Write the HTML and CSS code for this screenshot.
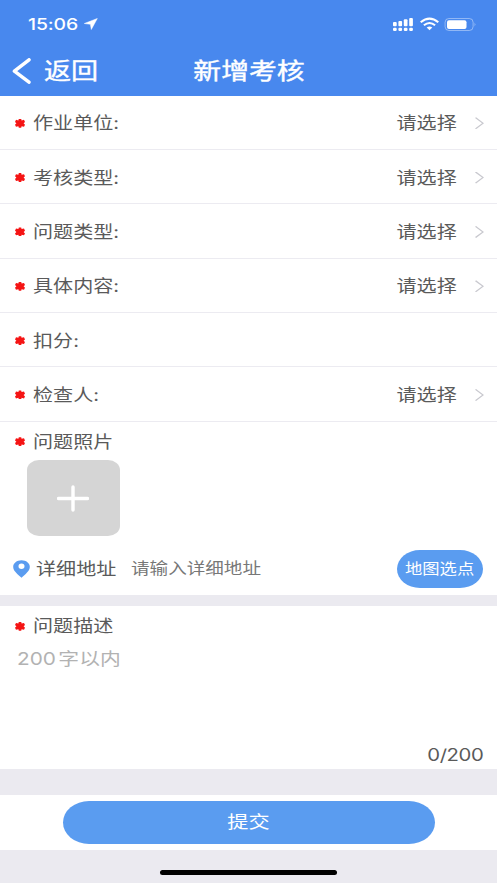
FILE: index.html
```html
<!DOCTYPE html>
<html lang="zh-CN">
<head>
<meta charset="utf-8">
<title>新增考核</title>
<link rel="stylesheet" href="styles.css">
</head>
<body>
<header class="header">
  <div class="status">
    <span class="wide clock">15:06</span>
    <svg class="locate" width="14" height="12" viewBox="0 0 14 12"><path d="M13.3 .5 7.3 11.5 6.4 6.3.3 5.5z" fill="#fff" stroke="#fff" stroke-width=".5" stroke-linejoin="round"/></svg>
    <svg class="signals" width="84" height="16" viewBox="0 0 84 16" fill="#fff">
      <g><rect x="0" y="6" width="3.7" height="4.3" rx="1"/><rect x="5.4" y="5" width="3.7" height="5.3" rx="1"/><rect x="10.8" y="3.2" width="3.7" height="7.1" rx="1"/><rect x="16.2" y="2" width="3.7" height="8.3" rx="1"/>
      <rect x="0" y="11.8" width="3.7" height="3.2" rx="1.2"/><rect x="5.4" y="11.8" width="3.7" height="3.2" rx="1.2"/><rect x="10.8" y="11.8" width="3.7" height="3.2" rx="1.2"/><rect x="16.2" y="11.8" width="3.7" height="3.2" rx="1.2"/></g>
      <g fill="none" stroke="#fff" stroke-width="2.1"><path d="M27.700 6.300Q36.500-.900 45.300 6.300"/><path d="M30.900 9.300Q36.500 4.700 42.100 9.300"/></g>
      <path d="M33.700 11.600Q36.500 9.300 39.300 11.600L36.500 14.200z"/>
      <rect x="52.1" y="2.5" width="28" height="12" rx="3.8" fill="none" stroke="#fff" stroke-opacity=".4"/>
      <rect x="54" y="4.2" width="19.5" height="8.7" rx="2"/>
      <path d="M81.600 6.600Q83.400 8.500 81.600 10.400z" opacity=".5"/>
    </svg>
  </div>
  <nav class="nav">
    <a class="back"><svg width="19" height="26" viewBox="0 0 19 26"><path d="M17 1.800 2.400 13.200 17 24.200" fill="none" stroke="#fff" stroke-width="3.500" stroke-linecap="round" stroke-linejoin="round"/></svg><span class="wide">返回</span></a>
    <h1 class="title"><span class="wide center">新增考核</span></h1>
  </nav>
</header>
<main>
  <section class="rows">
    <div class="row"><i class="star"></i><span class="wide">作业单位:</span><span class="wide value">请选择</span><i class="chev"></i></div>
    <div class="row"><i class="star"></i><span class="wide">考核类型:</span><span class="wide value">请选择</span><i class="chev"></i></div>
    <div class="row"><i class="star"></i><span class="wide">问题类型:</span><span class="wide value">请选择</span><i class="chev"></i></div>
    <div class="row"><i class="star"></i><span class="wide">具体内容:</span><span class="wide value">请选择</span><i class="chev"></i></div>
    <div class="row"><i class="star"></i><span class="wide">扣分:</span></div>
    <div class="row"><i class="star"></i><span class="wide">检查人:</span><span class="wide value">请选择</span><i class="chev"></i></div>
  </section>
  <section class="photos">
    <div class="label"><i class="star"></i><span class="wide">问题照片</span></div>
    <div class="add"><svg width="32" height="27" viewBox="0 0 32 27"><path d="M1.500 13.500H30.500M16 2V25" stroke="#fff" stroke-width="3.400" stroke-linecap="round"/></svg></div>
    <div class="address">
      <svg class="pin" width="17" height="18" viewBox="0 0 17 18"><path fill-rule="evenodd" d="M8.500 .2C3.800.2.2 3 .2 7c0 4 4.600 7.400 8.300 10.800C12.200 14.400 16.800 11 16.800 7c0-4-3.600-6.800-8.300-6.800zM8.500 3.500a3 2.700 0 1 1 0 5.400 3 2.700 0 0 1 0-5.400z" fill="#5a9cf0"/></svg>
      <span class="wide place">详细地址</span>
      <span class="wide hint">请输入详细地址</span>
      <button class="map"><span class="wide center">地图选点</span></button>
    </div>
  </section>
  <section class="desc">
    <div class="label"><i class="star"></i><span class="wide">问题描述</span></div>
    <p class="placeholder"><span class="wide">200<span class="cn">字以内</span></span></p>
    <p class="count"><span class="wide">0/200</span></p>
  </section>
  <section class="actions"><button class="submit"><span class="wide center">提交</span></button></section>
</main>
<footer class="home"><div class="bar"></div></footer>
</body>
</html>
```
FILE: styles.css
```css
* { box-sizing: border-box; }
body {
  margin: 0;
  width: 497px;
  height: 883px;
  overflow: hidden;
  background: #ebeaf0;
  color: #5a5a5a;
  font: 16.6px/24px Inter, "Noto Sans CJK SC", sans-serif;
}
h1, p { margin: 0; font-weight: normal; }
button { border: 0; padding: 0; font: inherit; }

/* Glyphs are drawn wider than tall throughout */
.wide {
  display: inline-block;
  white-space: nowrap;
  transform: scaleX(1.21);
  transform-origin: left center;
}
.wide.center { transform-origin: center; }

.header { height: 95.6px; background: #4888ee; color: #fff; }
.status { display: flex; height: 48px; padding: 0 20px 0 27.5px; align-items: center; }
.clock { width: 56px; font-size: 16px; font-weight: 500; letter-spacing: -.1px; }
.signals { margin-left: auto; margin-right: .5px; }
.nav { display: grid; grid-template-columns: 150px 1fr 150px; height: 45px; align-items: center; }
.back { display: flex; align-items: center; gap: 13px; padding-left: 12px; font-size: 22.4px; -webkit-text-stroke: .35px #fff; }
.title { text-align: center; font-size: 23px; -webkit-text-stroke: .4px #fff; }

.rows { background: #fff; }
.row {
  display: flex;
  align-items: center;
  height: 54.35px;
  padding: 2px 13px 0 15px;
  border-bottom: 1.4px solid #ecebf1;
}
.star {
  flex: none;
  width: 10px;
  height: 9px;
  margin-right: 8.4px;
  background: #f51414;
  clip-path: polygon(38% 0, 62% 0, 66% 18%, 90% 12%, 100% 36%, 86% 50%, 100% 66%, 90% 88%, 66% 82%, 62% 100%, 38% 100%, 34% 82%, 10% 88%, 0 66%, 14% 50%, 0 36%, 10% 12%, 34% 18%);
}
.value { margin-left: auto; margin-right: 18.5px; transform-origin: right center; }
.chev {
  width: 9px;
  height: 12px;
  background: #c9c9cf;
  clip-path: polygon(0 7%, 12% 0, 100% 50%, 12% 100%, 0 93%, 78% 50%);
}

.photos { height: 173.2px; padding-top: 8px; background: #fff; }
.label { display: flex; align-items: center; height: 24px; padding-left: 15px; }
.add {
  display: flex;
  align-items: center;
  justify-content: center;
  width: 93px;
  height: 76px;
  margin: 6.5px 0 0 26.5px;
  border-radius: 12px / 10px;
  background: #d5d5d5;
}
.address { display: flex; align-items: center; height: 38px; margin-top: 13.5px; padding: 0 14px 0 13px; }
.place { width: 95px; margin-left: 6px; }
.hint { padding-top: 1px; color: #777; font-size: 15.35px; }
.map {
  width: 86px;
  height: 38px;
  margin-left: auto;
  border-radius: 23px / 19px;
  background: #5a9cf0;
  color: #fff;
  font-size: 14.3px;
}

.desc { height: 162.5px; margin-top: 11.5px; padding-top: 8px; background: #fff; }
.placeholder { padding: 8.5px 0 0 17px; color: #b2b2b2; font-size: 17.2px; }
.cn { margin-left: 2px; }
.count { margin-top: 72.5px; padding-right: 14px; text-align: right; font-size: 16.8px; letter-spacing: -.35px; }
.count .wide { transform-origin: right center; }

.actions { display: flex; align-items: center; justify-content: center; height: 55px; margin-top: 26px; background: #fff; }
.submit {
  width: 372px;
  height: 43px;
  border-radius: 26px / 21.5px;
  background: #5a9cf0;
  color: #fff;
  font-size: 17.5px;
}
.home { display: flex; justify-content: center; padding-top: 20px; }
.bar { width: 177px; height: 5px; border-radius: 3px; background: #000; }
```
